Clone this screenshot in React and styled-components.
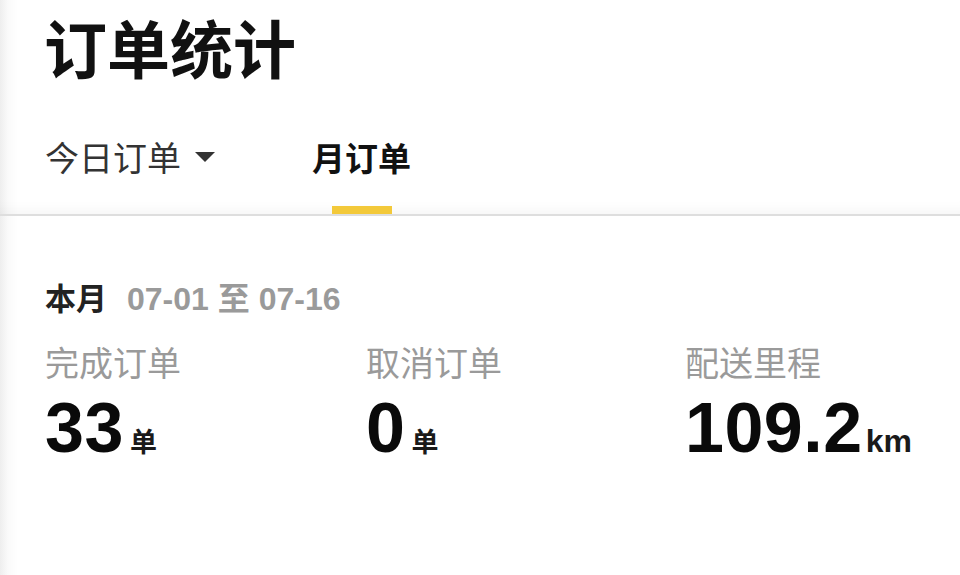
import React from "react";
import styled, { createGlobalStyle } from "styled-components";

const Global = createGlobalStyle`
  html, body { margin: 0; padding: 0; background: #fff; }
  body { font-family: "Noto Sans CJK SC", "Noto Sans", sans-serif; }
`;

const Page = styled.div`
  width: 960px;
  height: 575px;
  overflow: hidden;
  background: linear-gradient(to right, #eeeeee 0px, #fafafa 8px, #ffffff 18px);
`;

const Title = styled.h1`
  margin: 0;
  padding: 0 0 0 44px;
  height: 92px;
  font-size: 63px;
  line-height: 92px;
  font-weight: 700;
  color: #111;
`;

const TabBar = styled.div`
  display: flex;
  align-items: flex-end;
  height: 124px;
  padding-left: 45px;
  border-bottom: 2px solid #dedede;
  box-shadow: inset 0 -14px 14px -12px rgba(0,0,0,0.05);
  box-sizing: border-box;
`;

const Tab = styled.div`
  position: relative;
  display: flex;
  align-items: center;
  height: 100px;
  padding-bottom: 15px;
  box-sizing: border-box;
  margin-right: ${p => p.$gap || 0}px;
  font-size: ${p => (p.$active ? 33 : 34)}px;
  font-weight: ${p => (p.$active ? 700 : 400)};
  color: ${p => (p.$active ? "#111" : "#333")};
`;

const Indicator = styled.span`
  position: absolute;
  left: 50%;
  bottom: 0;
  transform: translateX(-50%);
  width: 60px;
  height: 8px;
  background: #f3c93a;
`;

const Caret = styled.svg`
  margin-left: 14px;
  width: 20px;
  height: 10px;
`;

const Section = styled.div`
  padding: 63px 0 0 45px;
`;

const PeriodRow = styled.div`
  display: flex;
  align-items: baseline;
  gap: 20px;
  height: 36px;
  line-height: 36px;
`;

const Period = styled.span`
  font-size: 31px;
  font-weight: 700;
  color: #222;
`;

const Range = styled.span`
  font-size: 32px;
  font-weight: 700;
  color: #9a9a9a;
  font-family: "Liberation Sans", "Noto Sans CJK SC", sans-serif;
`;

const Stats = styled.div`
  display: grid;
  grid-template-columns: 321px 319px 1fr;
  margin-top: 27px;
`;

const Stat = styled.div`
  display: flex;
  flex-direction: column;
`;

const Label = styled.div`
  font-size: 34px;
  line-height: 40px;
  color: #9a9a9a;
  font-weight: 400;
`;

const ValueRow = styled.div`
  display: flex;
  align-items: baseline;
  margin-top: 14px;
  height: 64px;
`;

const Value = styled.span`
  font-family: "Liberation Sans", Arial, sans-serif;
  font-size: 70px;
  line-height: 64px;
  font-weight: 700;
  color: #0a0a0a;
  letter-spacing: 0.5px;
`;

const Unit = styled.span`
  margin-left: ${p => (p.$latin ? 3 : 6)}px;
  font-family: ${p => (p.$latin ? '"Liberation Sans", Arial, sans-serif' : '"Noto Sans CJK SC", sans-serif')};
  font-size: ${p => (p.$latin ? 32 : 27)}px;
  font-weight: 700;
  color: #1a1a1a;
`;

const stats = [
  { label: "完成订单", value: "33", unit: "单" },
  { label: "取消订单", value: "0", unit: "单" },
  { label: "配送里程", value: "109.2", unit: "km", latin: true },
];

export default function App() {
  return (
    <Page>
      <Global />
      <Title>订单统计</Title>
      <TabBar>
        <Tab $gap={97}>
          今日订单
          <Caret viewBox="0 0 20 10">
            <path d="M0 0 L20 0 L10 10 Z" fill="#333" />
          </Caret>
        </Tab>
        <Tab $active>
          月订单
          <Indicator />
        </Tab>
      </TabBar>
      <Section>
        <PeriodRow>
          <Period>本月</Period>
          <Range>07-01 至 07-16</Range>
        </PeriodRow>
        <Stats>
          {stats.map(s => (
            <Stat key={s.label}>
              <Label>{s.label}</Label>
              <ValueRow>
                <Value>{s.value}</Value>
                <Unit $latin={s.latin}>{s.unit}</Unit>
              </ValueRow>
            </Stat>
          ))}
        </Stats>
      </Section>
    </Page>
  );
}
